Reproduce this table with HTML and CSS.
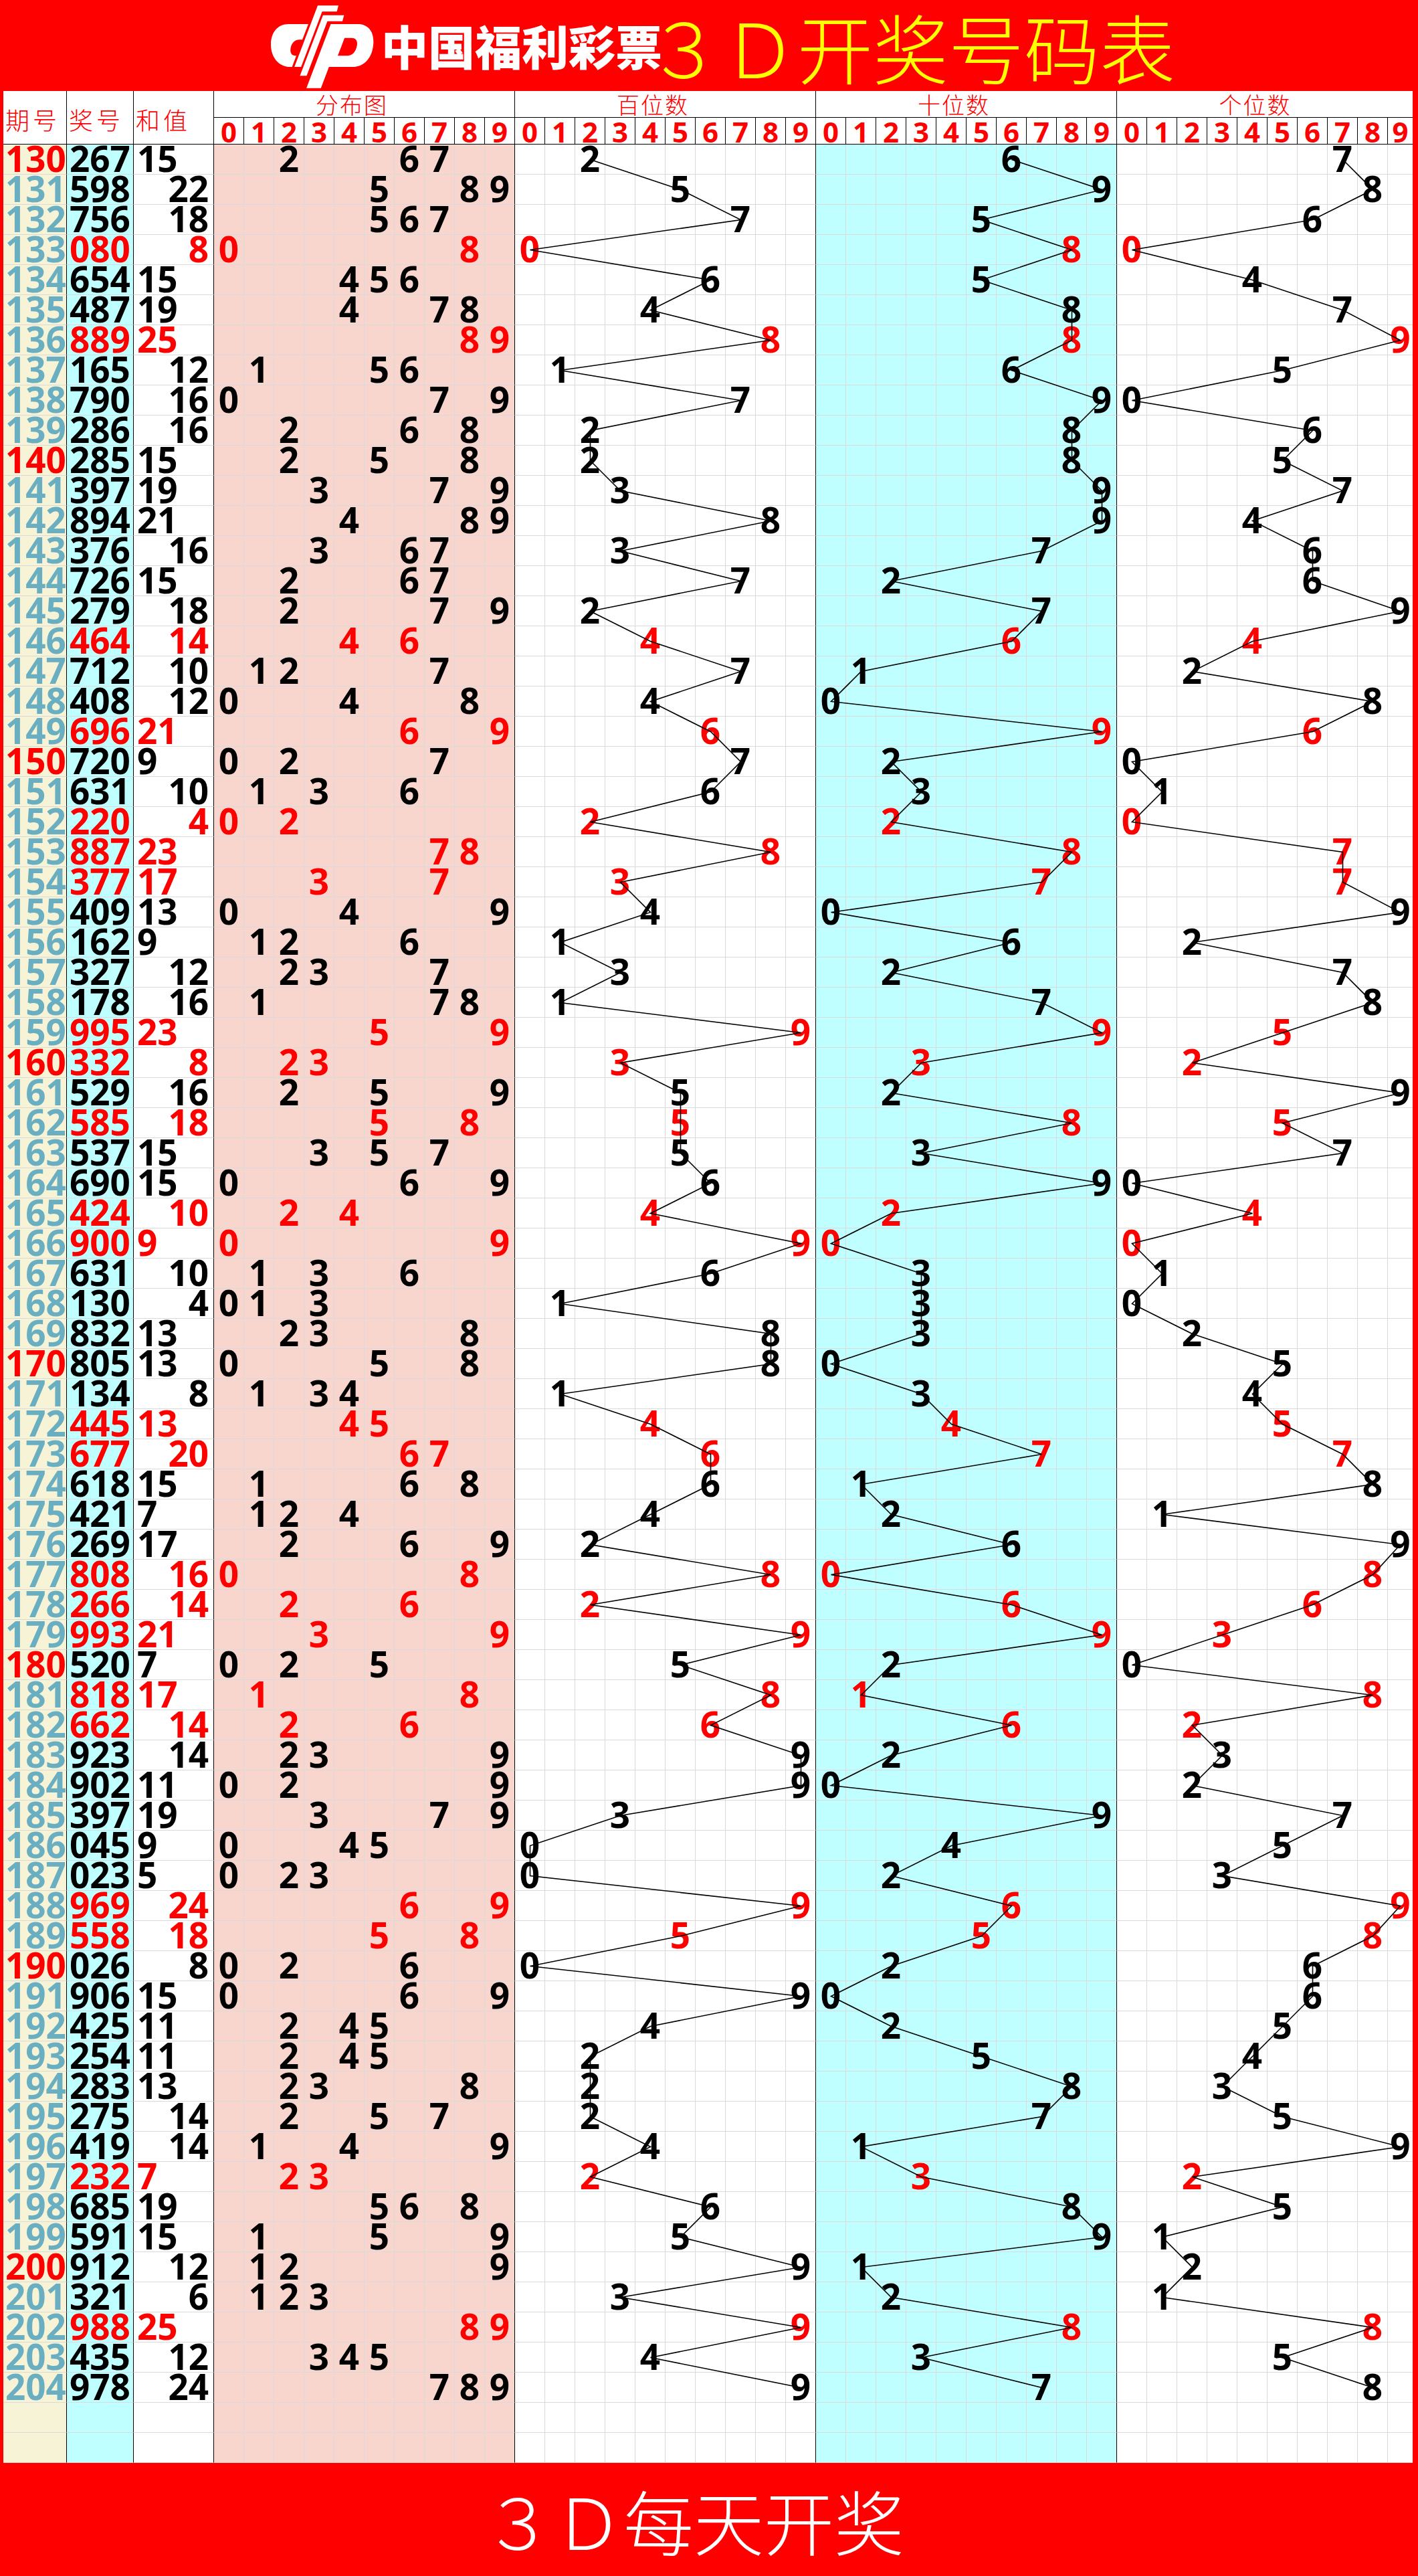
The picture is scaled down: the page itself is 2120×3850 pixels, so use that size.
FILE: index.html
```html
<!DOCTYPE html>
<html lang="zh-CN">
<head>
<meta charset="utf-8">
<title>3D开奖号码表</title>
<link rel="stylesheet" href="styles.css">
</head>
<body>
<header class="topbar">
  <svg class="logo" viewBox="0 0 510 408" width="170" height="136" aria-hidden="true">
    <path fill="#fff" d="M198 108 H110 C58 108 30 148 30 200 C30 258 66 300 118 300 H125 L144 250 H140 C124 250 116 238 118 220 C121 195 135 178 158 178 H171 Z"/>
    <polygon fill="#fff" points="240,25 333,25 326,52 260,52 165.5,300 135.5,300"/>
    <polygon fill="#fff" points="263.7,68 358,68 351,95 283.4,95 190.3,340 160.3,340"/>
    <path fill="#fff" d="M298.5 108 H420 C465 108 490 140 490 185 C490 250 455 300 395 300 H290.5 L254.4 395 H189.4 Z"/>
    <path fill="#f00" d="M360.4 170 H392 C412 170 420 185 416 205 C411 232 395 250 372 250 H330 Z"/>
  </svg>
  <span class="brand">中国福利彩票</span>
  <span class="title">３Ｄ开奖号码表</span>
</header>
<main class="sheet">
  <div class="thead">
    <div class="th-lbl">期号</div>
    <div class="th-lbl">奖号</div>
    <div class="th-lbl">和值</div>
    <div class="th-sec"><div class="sec-title">分布图</div><div class="sec-digits"></div></div>
    <div class="th-sec"><div class="sec-title">百位数</div><div class="sec-digits"></div></div>
    <div class="th-sec"><div class="sec-title">十位数</div><div class="sec-digits"></div></div>
    <div class="th-sec th-last"><div class="sec-title">个位数</div><div class="sec-digits"></div></div>
  </div>
  <div class="tbody" id="tbody"></div>
</main>
<footer class="foot">３Ｄ每天开奖</footer>
<script src="script.js"></script>
</body>
</html>
```
FILE: styles.css
```css
* { box-sizing: border-box; margin: 0; padding: 0; }
html, body { width: 2120px; height: 3850px; background: #fff; }
body { font-family: "Open Sans", "Liberation Sans", sans-serif; }

.topbar { height: 136px; background: #f00; display: flex; align-items: center; }
.logo { flex: none; margin-left: 395px; display: block; }
.brand { margin-left: 5px; color: #fff; font: 900 70px/1 "Noto Sans CJK SC", sans-serif; white-space: nowrap; }
.title { margin-left: -24px; color: #ff0; font: 300 113px/1 "Noto Sans CJK SC", sans-serif; white-space: nowrap; }

.sheet { display: block; width: 2120px; border-left: 5px solid #f00; border-right: 8px solid #f00; }

.thead { display: grid; grid-template-columns: 95px 100px 120px 450px 450px 450px 442px; width: 2107px; height: 80px; border-bottom: 1px solid #000; }
.th-lbl { border-right: 1px solid #000; color: #f00; font: 300 36px/1 "Noto Sans CJK SC", sans-serif; letter-spacing: 5px; display: flex; align-items: center; padding: 4px 0 0 3px; white-space: nowrap; }
.th-sec { display: flex; flex-direction: column; }
.sec-title { height: 40px; border-bottom: 1px solid #000; border-right: 1px solid #000; display: flex; align-items: center; justify-content: center; padding-right: 37px; color: #f00; font: 300 34px/1 "Noto Sans CJK SC", sans-serif; letter-spacing: 2px; }
.th-last .sec-title { border-right: 0; padding-right: 29px; }
.sec-digits { display: grid; grid-template-columns: repeat(10, 45px); height: 39px; }
.th-last .sec-digits { grid-template-columns: repeat(9, 45px) 37px; }
.hd { border-right: 1px solid #000; color: #f00; font: 700 42px/39px "Open Sans", sans-serif; text-align: center; padding-top: 1px; }
.th-last .hd:last-child { border-right: 0; }

.tbody { position: relative; width: 2107px; }
.row { display: grid; grid-template-columns: 95px 100px 120px repeat(39, 45px) 37px; width: 2107px; height: 45px; }
.row > div { height: 45px; border-right: 1px solid #dadada; border-bottom: 1px solid #dadada; font: 700 53px/42px "Open Sans", sans-serif; color: #000; white-space: nowrap; }
.row > .c-qi, .row > .c-num, .row > .c-sum,
.row > div:nth-child(13), .row > div:nth-child(23), .row > div:nth-child(33) { border-right-color: #000; }
.row > div:last-child { border-right: 0; }

.c-qi { background: #f7f3d7; padding-left: 3px; }
.row > .c-qi { color: #69afc1; }
.row > .c-qi.hl { color: #f00; }
.c-num { background: #c0ffff; padding-left: 4px; }
.c-sum { background: #fff; }
.c-sum.odd { text-align: left; padding-left: 5px; }
.c-sum.even { text-align: right; padding-right: 7px; }
.c-d { text-align: center; }
.s0 { background: #f8d6cd; }
.s1 { background: #fff; }
.s2 { background: #c0ffff; }
.s3 { background: #fff; }
.row.pair > .c-num, .row.pair > .c-sum, .row.pair > .c-d { color: #f00; }

.trend { position: absolute; left: 0; top: 0; pointer-events: none; }
.trend-line { fill: none; stroke: #000; stroke-width: 1.6; }

.foot { height: 169px; background: #f00; display: flex; align-items: center; padding-left: 722px; color: #fff; font: 300 105px/1 "Noto Sans CJK SC", sans-serif; white-space: nowrap; }
```
FILE: script.js
```js
(function () {
  var nums = "267 598 756 080 654 487 889 165 790 286 285 397 894 376 726 279 464 712 408 696 720 631 220 887 377 409 162 327 178 995 332 529 585 537 690 424 900 631 130 832 805 134 445 677 618 421 269 808 266 993 520 818 662 923 902 397 045 023 969 558 026 906 425 254 283 275 419 232 685 591 912 321 988 435 978".split(" ");
  var CW = 45, RH = 45, X0 = 315, START = 130, EXTRA = 2;

  document.querySelectorAll('.sec-digits').forEach(function (el) {
    for (var k = 0; k < 10; k++) {
      var c = document.createElement('div');
      c.className = 'hd';
      c.textContent = k;
      el.appendChild(c);
    }
  });

  var tbody = document.getElementById('tbody');
  var frag = document.createDocumentFragment();
  function cell(row, cls, txt) {
    var c = document.createElement('div');
    c.className = cls;
    if (txt !== '' && txt !== null && txt !== undefined) c.textContent = txt;
    row.appendChild(c);
  }

  var total = nums.length + EXTRA;
  for (var i = 0; i < total; i++) {
    var row = document.createElement('div');
    var num = nums[i];
    var s, k;
    if (!num) {
      row.className = 'row';
      cell(row, 'c-qi', '');
      cell(row, 'c-num', '');
      cell(row, 'c-sum', '');
      for (s = 0; s < 4; s++) for (k = 0; k < 10; k++) cell(row, 'c-d s' + s, '');
      frag.appendChild(row);
      continue;
    }
    var d = num.split('').map(Number);
    var pair = (d[0] === d[1] || d[1] === d[2] || d[0] === d[2]);
    var sum = d[0] + d[1] + d[2];
    var period = START + i;
    row.className = 'row' + (pair ? ' pair' : '');
    cell(row, 'c-qi' + (period % 10 === 0 ? ' hl' : ''), period);
    cell(row, 'c-num', num);
    cell(row, 'c-sum ' + (sum % 2 ? 'odd' : 'even'), sum);
    for (k = 0; k < 10; k++) cell(row, 'c-d s0', d.indexOf(k) >= 0 ? k : '');
    for (s = 0; s < 3; s++) for (k = 0; k < 10; k++) cell(row, 'c-d s' + (s + 1), d[s] === k ? k : '');
    frag.appendChild(row);
  }
  tbody.appendChild(frag);

  var NS = 'http://www.w3.org/2000/svg';
  var svg = document.createElementNS(NS, 'svg');
  svg.setAttribute('class', 'trend');
  svg.setAttribute('width', 2107);
  svg.setAttribute('height', total * RH);
  for (var p = 0; p < 3; p++) {
    var pts = nums.map(function (n, idx) {
      var v = +n.charAt(p);
      var w = (p === 2 && v === 9) ? 37 : CW;
      return (X0 + CW * (10 * (p + 1) + v) + w / 2) + ',' + (RH * idx + RH / 2);
    }).join(' ');
    var pl = document.createElementNS(NS, 'polyline');
    pl.setAttribute('points', pts);
    pl.setAttribute('class', 'trend-line');
    svg.appendChild(pl);
  }
  tbody.appendChild(svg);
})();
```
